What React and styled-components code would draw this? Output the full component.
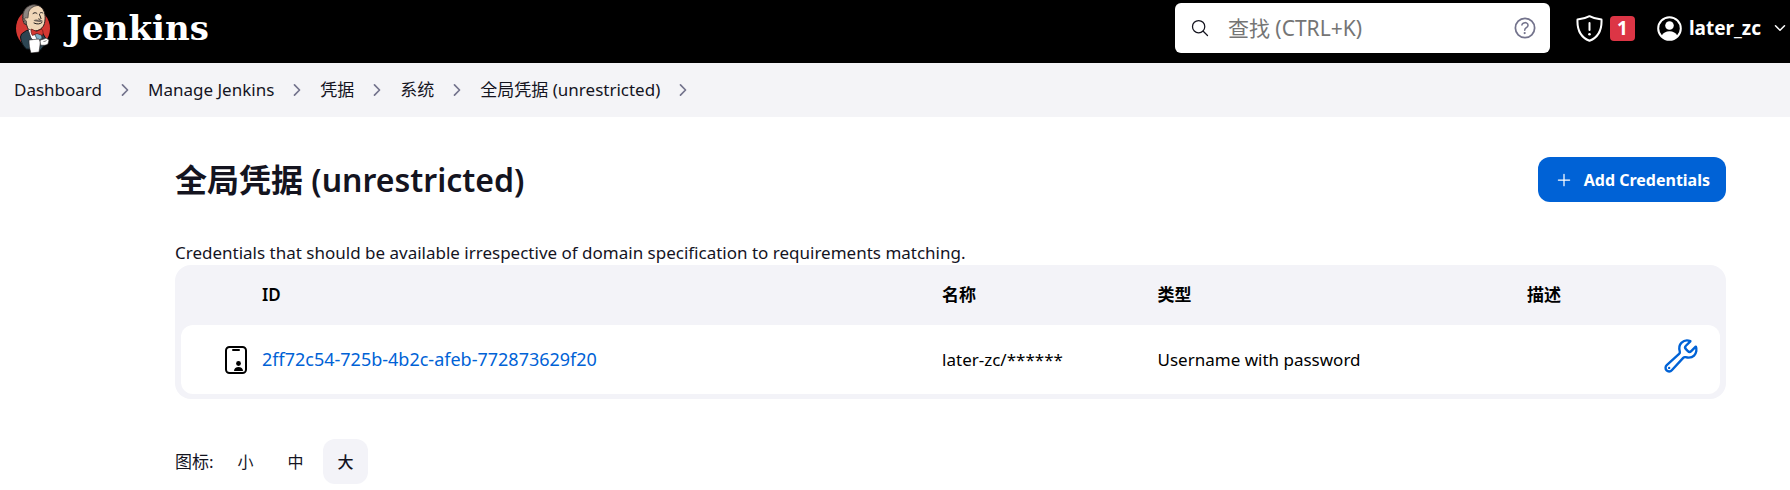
import React from "react";
import styled, { createGlobalStyle } from "styled-components";
import {
  IoSearchOutline,
  IoHelpCircleOutline,
  IoChevronForwardOutline,
  IoChevronDownOutline,
  IoAddOutline,
  IoBuildOutline,
} from "react-icons/io5";

const sans = `"Noto Sans", "Noto Sans CJK SC", sans-serif`;

const GlobalStyle = createGlobalStyle`
  *, *::before, *::after { box-sizing: border-box; }
  body {
    margin: 0;
    background: #fff;
    color: #14141f;
    font: 400 17px/24px ${sans};
  }
  a { color: inherit; text-decoration: none; }
  svg { display: block; flex: none; }
`;

const Header = styled.header`
  display: flex;
  align-items: center;
  justify-content: space-between;
  height: 63px;
  padding: 0 2px 7px 16px;
  background: #000;
  color: #fff;
`;

const Brand = styled.a`
  display: flex;
  align-items: center;
  gap: 15px;
`;

const BrandName = styled.span`
  font: 700 34px/48px "DejaVu Serif", serif;
`;

const HeaderTools = styled.div`
  display: flex;
  align-items: center;
`;

const SearchBox = styled.label`
  display: flex;
  align-items: center;
  width: 375px;
  height: 50px;
  margin-right: 26px;
  padding: 0 11px 0 15px;
  border-radius: 6px;
  background: #fff;
  color: #14141f;
`;

const SearchInput = styled.input`
  flex: 1;
  min-width: 0;
  height: 40px;
  margin-left: 18px;
  padding: 0;
  border: 0;
  outline: 0;
  background: transparent;
  color: #14141f;
  font: 400 21px/40px ${sans};
  &::placeholder { color: #757575; opacity: 1; }
`;

const HelpLink = styled.a`
  color: #73738c;
`;

const AlertButton = styled.button`
  display: flex;
  align-items: center;
  gap: 7px;
  margin-right: 22px;
  padding: 0;
  border: 0;
  background: none;
  color: #fff;
`;

const Badge = styled.span`
  width: 25px;
  border-radius: 4px;
  background: #dc3545;
  font: 700 19px/25px ${sans};
  text-align: center;
`;

const UserMenu = styled.button`
  display: flex;
  align-items: center;
  gap: 7px;
  padding: 0;
  border: 0;
  background: none;
  color: #fff;
  font: 700 19px/28px ${sans};
  svg:last-child { margin-left: 4px; }
`;

const BreadcrumbBar = styled.nav`
  padding: 15px 14px;
  background: #f4f4f7;
`;

const BreadcrumbList = styled.ol`
  display: flex;
  align-items: center;
  margin: 0;
  padding: 0;
  list-style: none;
`;

const Crumb = styled.li`
  display: flex;
  align-items: center;
  svg { margin: 0 14px; color: #73738c; }
`;

const Main = styled.main`
  padding: 40px 64px 6px 175px;
`;

const TitleBar = styled.div`
  display: flex;
  align-items: center;
  justify-content: space-between;
`;

const Title = styled.h1`
  margin: 0;
  font: 600 32px/44px ${sans};
`;

const PrimaryButton = styled.a`
  display: flex;
  align-items: center;
  gap: 10px;
  height: 45px;
  padding: 0 16px;
  border-radius: 12px;
  background: #0062d6;
  color: #fff;
  font-size: 16px;
  font-weight: 700;
`;

const Description = styled.p`
  margin: 39px 0 0;
`;

const TableFrame = styled.div`
  padding: 0 6px 5px;
  border-radius: 16px;
  background: #f3f3f8;
`;

const Table = styled.table`
  width: 100%;
  table-layout: fixed;
  border-collapse: separate;
  border-spacing: 0;
  color: #000;
`;

const HeadCell = styled.th`
  width: ${(p) => p.$width || "auto"};
  height: 60px;
  padding: 0;
  font-weight: 600;
  text-align: left;
`;

const Cell = styled.td`
  height: 69px;
  padding: 0;
  background: #fff;
  &:first-child {
    padding-left: 43px;
    border-radius: 12px 0 0 12px;
  }
  &:last-child {
    padding: 0 20px 8px 12px;
    border-radius: 0 12px 12px 0;
  }
`;

const TextLink = styled.a`
  && { color: #0062d6; }
  font-size: 18px;
`;

const ToolLink = styled.a`
  && { color: #0062d6; }
  display: flex;
`;

const SizeBar = styled.div`
  display: flex;
  align-items: center;
  gap: 5px;
  margin-top: 40px;
`;

const SizeLabel = styled.span`
  width: 43px;
`;

const SizeButton = styled.button`
  width: 45px;
  height: 45px;
  padding: 0;
  border: 0;
  border-radius: 12px;
  background: ${(p) => (p.$active ? "#f3f3f8" : "transparent")};
  color: #14141f;
  font: ${(p) => (p.$active ? 500 : 400)} 16px/24px ${sans};
`;

function JenkinsLogo() {
  return (
    <svg width="35" height="50" viewBox="0 0 35 50" aria-hidden="true">
      <ellipse cx="17" cy="25.500" rx="17" ry="19" fill="#d33833" />
      <path d="M5.500 31 4.500 34c.5 5 2.500 9.500 6 12l14 1 4-5 1-7-3-5-8-3-8 .5z" fill="#2d4552" stroke="#0b1418" />
      <path d="M8.500 21C6 17 6 10 9 6.500 12 2 20 0 25 4c3.500 3 4.500 8 4 13-.3 5-2.500 9-7.500 10.500-3 1-6.500.8-8.500-.5-1.500-1.500-2-4-2.500-5.500z" fill="#f0d6b7" stroke="#231f20" />
      <path d="M10.500 22C7 18 6 11 9 6.500 12 2 18 .8 22 2.500c-5 .5-8.500 3-9.500 7l-.5 5c-.3 1-1.500.5-2 1.500-.5 2 1 3 .5 6z" fill="#8d8580" stroke="#332d2a" strokeWidth=".7" />
      <path d="M10.500 14.500c-2-.5-2.500 3.500.5 4" fill="#f0d6b7" stroke="#332d2a" strokeWidth=".7" />
      <path d="M17 10.500c1.500-1.200 3-1 4 0M24 10c1-.8 2.500-.5 3 .2M23.500 11.500l1.500 4c-.5 1-2 1-2.500.5M18 20c3 1.500 6 1.300 8-.5" fill="none" stroke="#231f20" strokeLinecap="round" />
      <path d="M17.500 17.500c2-1.500 4-1 5.500 0 1.500-.8 3-.5 4 .7-2 1-6 1.200-9.500-.7z" fill="#6d625b" />
      <path d="m12 26 3 9 4 4 7-3-1-7-7-1z" fill="#fff" stroke="#231f20" strokeWidth=".6" />
      <path d="m18 30 4 8 4-3-1-5z" fill="#81b0c4" stroke="#1d3a47" strokeWidth=".7" />
      <path d="m15.500 26 5 2.500 5-2.500c1.800 1.500 2 4.500 1 6.500L21 30.500l-4.500 2c-1.500-2-1.800-4.500-1-6.500z" fill="#d33833" stroke="#5c1512" strokeWidth=".7" />
      <path d="M13 37l10-1 1.500 3L23 49l-8 1c-1.500-4-2-9-2-13z" fill="#fff" stroke="#231f20" strokeWidth=".6" />
      <path d="M24 37.500c2-1.500 4-1 6-2.500l3 2-1 4c-2 1.500-5 1.500-7.500 1z" fill="#fff" stroke="#231f20" strokeWidth=".6" />
      <path d="M27.500 38.500c1.500 0 2-.5 3-1" fill="none" stroke="#231f20" strokeWidth=".6" />
    </svg>
  );
}

function ShieldIcon() {
  return (
    <svg width="27" height="27" viewBox="0 0 27 27" fill="none" stroke="currentColor" strokeWidth="2" strokeLinecap="round" strokeLinejoin="round" aria-hidden="true">
      <path d="M13.500 1.200c-3.500 2-7.500 3-12 3.300-.5 10 2.500 17.500 12 21.300 9.500-3.800 12.500-11.300 12-21.300-4.500-.3-8.500-1.300-12-3.300z" />
      <path d="M13.500 8v7" />
      <circle cx="13.500" cy="19.200" r="1.300" fill="currentColor" stroke="none" />
    </svg>
  );
}

function PersonIcon() {
  return (
    <svg width="25" height="25" viewBox="0 0 25 25" aria-hidden="true">
      <circle cx="12.500" cy="12.500" r="11.300" fill="none" stroke="currentColor" strokeWidth="2" />
      <circle cx="12.500" cy="9.500" r="4.300" fill="currentColor" />
      <path d="M4.500 20c1.500-3.200 4.500-4.700 8-4.700s6.500 1.500 8 4.700c-2 2.500-5 4-8 4s-6-1.500-8-4z" fill="currentColor" />
    </svg>
  );
}

function CredentialIcon() {
  return (
    <svg width="24" height="30" viewBox="0 0 24 30" aria-hidden="true">
      <rect x="2" y="2" width="20" height="26" rx="3.500" fill="none" stroke="currentColor" strokeWidth="2" />
      <path d="M9 5h6" stroke="currentColor" strokeWidth="2" strokeLinecap="round" />
      <circle cx="14.500" cy="18.500" r="2.400" fill="currentColor" />
      <path d="M10 26c0-2.700 2-4 4.500-4s4.500 1.300 4.500 4z" fill="currentColor" />
    </svg>
  );
}

const crumbs = ["Dashboard", "Manage Jenkins", "凭据", "系统", "全局凭据 (unrestricted)"];
const sizes = ["小", "中", "大"];

export default function App() {
  return (
    <>
      <GlobalStyle />
      <Header>
        <Brand href="#">
          <JenkinsLogo />
          <BrandName>Jenkins</BrandName>
        </Brand>
        <HeaderTools>
          <SearchBox>
            <IoSearchOutline size={20} />
            <SearchInput type="search" aria-label="查找" placeholder="查找 (CTRL+K)" />
            <HelpLink href="#" aria-label="Help">
              <IoHelpCircleOutline size={28} />
            </HelpLink>
          </SearchBox>
          <AlertButton type="button">
            <ShieldIcon />
            <Badge>1</Badge>
          </AlertButton>
          <UserMenu type="button">
            <PersonIcon />
            later_zc
            <IoChevronDownOutline size={16} />
          </UserMenu>
        </HeaderTools>
      </Header>
      <BreadcrumbBar>
        <BreadcrumbList>
          {crumbs.map((c) => (
            <Crumb key={c}>
              <a href="#">{c}</a>
              <IoChevronForwardOutline size={18} />
            </Crumb>
          ))}
        </BreadcrumbList>
      </BreadcrumbBar>
      <Main>
        <TitleBar>
          <Title>全局凭据 (unrestricted)</Title>
          <PrimaryButton href="#">
            <IoAddOutline size={20} />
            Add Credentials
          </PrimaryButton>
        </TitleBar>
        <Description>
          Credentials that should be available irrespective of domain specification to requirements matching.
        </Description>
        <TableFrame>
          <Table>
            <thead>
              <tr>
                <HeadCell $width="81px" />
                <HeadCell>ID</HeadCell>
                <HeadCell $width="14%">名称</HeadCell>
                <HeadCell $width="24%">类型</HeadCell>
                <HeadCell $width="8%">描述</HeadCell>
                <HeadCell $width="70px" />
              </tr>
            </thead>
            <tbody>
              <tr>
                <Cell><CredentialIcon /></Cell>
                <Cell><TextLink href="#">2ff72c54-725b-4b2c-afeb-772873629f20</TextLink></Cell>
                <Cell>later-zc/******</Cell>
                <Cell>Username with password</Cell>
                <Cell />
                <Cell>
                  <ToolLink href="#" aria-label="Update">
                    <IoBuildOutline size={38} />
                  </ToolLink>
                </Cell>
              </tr>
            </tbody>
          </Table>
        </TableFrame>
        <SizeBar>
          <SizeLabel>图标:</SizeLabel>
          {sizes.map((s) => (
            <SizeButton key={s} type="button" $active={s === "大"}>{s}</SizeButton>
          ))}
        </SizeBar>
      </Main>
    </>
  );
}
